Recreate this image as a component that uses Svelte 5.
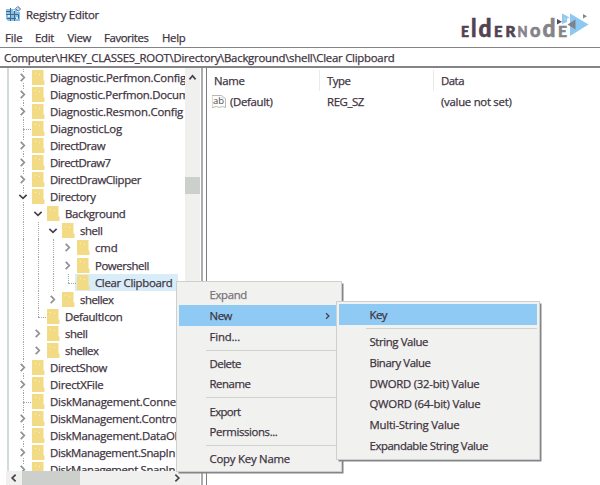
<script>
  // label, width, level, state (c = collapsed, o = open, l = leaf)
  const tree = [
    ['Diagnostic.Perfmon.Config', 136, 0, 'c'],
    ['Diagnostic.Perfmon.Docum', 139, 0, 'c'],
    ['Diagnostic.Resmon.Config', 133, 0, 'c'],
    ['DiagnosticLog', 72, 0, 'l'],
    ['DirectDraw', 55, 0, 'c'],
    ['DirectDraw7', 60.5, 0, 'c'],
    ['DirectDrawClipper', 91, 0, 'c'],
    ['Directory', 45.5, 0, 'o'],
    ['Background', 60.5, 1, 'o'],
    ['shell', 22.5, 2, 'o'],
    ['cmd', 22.5, 3, 'c'],
    ['Powershell', 54, 3, 'c'],
    ['Clear Clipboard', 77.5, 3, 'l', true],
    ['shellex', 33.5, 2, 'c'],
    ['DefaultIcon', 57.5, 1, 'l'],
    ['shell', 22.5, 1, 'c'],
    ['shellex', 33.5, 1, 'c'],
    ['DirectShow', 57, 0, 'c'],
    ['DirectXFile', 53.5, 0, 'c'],
    ['DiskManagement.Connection', 151, 0, 'l'],
    ['DiskManagement.Control', 129, 0, 'c'],
    ['DiskManagement.DataObject', 149, 0, 'c'],
    ['DiskManagement.SnapIn', 125, 0, 'c'],
    ['DiskManagement.SnapIn', 125, 0, 'c']
  ];
  const menus = [['File', 17.5, 5], ['Edit', 19, 12.5], ['View', 23.5, 13.5], ['Favorites', 44.5, 13], ['Help', 23.5, 13.5]];
  const context = [['Expand', 37.5], ['New', 22.5], ['Find...', 30.5], null, ['Delete', 31.5], ['Rename', 41], null, ['Export', 31], ['Permissions...', 68], null, ['Copy Key Name', 80.5]];
  const sub = [['Key', 17.5], null, ['String Value', 58.5], ['Binary Value', 61], ['DWORD (32-bit) Value', 110], ['QWORD (64-bit) Value', 111], ['Multi-String Value', 90], ['Expandable String Value', 118.5]];
  const logo = [
    ['E', 461, 8, 15], ['l', 471, 5.5, 25], ['d', 478.5, 13, 25], ['E', 494, 8.5, 15], ['R', 505.5, 10, 15],
    ['N', 517.5, 10, 15], ['o', 530, 10.5, 19], ['d', 542.5, 13, 25], ['E', 558, 9, 15]
  ];

  // Spreads the letters so that a label takes exactly the given width
  function fit(node, width) {
    const apply = () => {
      node.style.letterSpacing = '0px';
      const natural = node.getBoundingClientRect().width;
      node.style.letterSpacing = (width - natural) / node.textContent.length + 'px';
    };
    apply();
    document.fonts?.ready.then(apply);
  }
</script>

{#snippet label(text, width)}<span class="label" use:fit={width}>{text}</span>{/snippet}

{#snippet items(list, active)}
  {#each list as item}
    {#if item}
      <div class="item" class:active={item[0] === active} class:muted={item[0] === 'Expand'}>
        {@render label(item[0], item[1])}
        {#if item[0] === 'New'}<svg class="arrow" width="6" height="8" viewBox="0 0 6 8"><path d="M1.5 1.7 3.9 4 1.5 6.3" /></svg>{/if}
      </div>
    {:else}
      <div class="separator"></div>
    {/if}
  {/each}
{/snippet}

<div class="window">
  <header>
    <svg class="app-icon" width="17" height="17" viewBox="0 0 17 17">
      <path fill="#83c2ee" d="M1 3h11v3h3v9H3l-2-2z" />
      <path fill="none" stroke="#4c6680" stroke-width="1" d="M1.5 5.5h4v-3m0 3v3h-4m4 0h4v-3m-7 7h11v-4h-4v6m-4-6v6" />
      <path fill="#d8effc" d="M3 9h2v2H3zm5-5h2v1H8zm3 7h2v2h-2z" />
      <path fill="#b4dcf5" stroke="#54708a" d="m13.2.8 2.4 2.2-2.4 2.2L11 3z" />
    </svg>
    {@render label('Registry Editor', 73)}
  </header>
  <svg class="logo" width="600" height="47" viewBox="0 0 600 47" role="img" aria-label="ElderNode">
    {#each logo as [c, x, w, size], i}
      <text {x} y="37" font-size={size} textLength={w} lengthAdjust="spacingAndGlyphs" fill={i < 5 ? '#514353' : '#858489'} stroke={i < 5 ? '#514353' : '#858489'}>{c}</text>
    {/each}
    <path fill="#8cc8f1" d="M562 13.5l5 2.5v6l-5 2zM570 13.5 588.5 24.5 570 36z" />
    <path fill="#b8cfdd" d="m564 17 3 2-3 2zm3-1 3 1.5-3 1.5z" />
    <path fill="#81818a" d="M575.5 19.5v10l-8-5z" />
    <path fill="#56485b" d="m557 19 5 2.8-5 2.7z" />
    <path fill="#7b8990" d="m583 14 4 2.2-4 2.3z" />
  </svg>
  <nav>
    {#each menus as [t, w, gap]}<span style:margin-left="{gap}px">{@render label(t, w)}</span>{/each}
  </nav>
  <div class="address">{@render label('Computer\\HKEY_CLASSES_ROOT\\Directory\\Background\\shell\\Clear Clipboard', 390.5)}</div>
  <main>
    <aside>
      <div class="upper">
        <div class="tree">
          {#each tree as [t, w, level, state, selected], i}
            <div class="row">
              {#each Array(level) as _}<i class="cell line"></i>{/each}
              <i class="cell" class:line={state === 'l' || i < 7 || level === 0} class:last={selected || t === 'DefaultIcon'} class:leaf={state === 'l'}>
                {#if state === 'c'}<svg width="8" height="11" viewBox="0 0 8 11"><path stroke="#909194" d="m2.3 2.4 3 3.1-3 3.1" /></svg>{/if}
                {#if state === 'o'}<svg width="10" height="8" viewBox="0 0 10 8"><path stroke="#493e4c" d="M2 2.5 5 5.3l3-2.8" /></svg>{/if}
              </i>
              <div class="entry" class:selected>
                <svg class="folder" width="13" height="15" viewBox="0 0 13 15"><path fill="#f3db86" d="M0 0h11.5v10.5h1V15H0z" /><path fill="#fff0b6" d="M3 3h1v1H3zm4 1h1v1H7z" /></svg>
                {@render label(t, w)}
              </div>
            </div>
          {/each}
        </div>
        <div class="vscroll">
          <svg width="15" height="15" viewBox="0 0 15 15"><path d="m5 10.7 2.5-2.9 2.5 2.9" /></svg>
          <div class="thumb"></div>
        </div>
      </div>
      <div class="hscroll">
        <svg width="14" height="14" viewBox="0 0 14 14"><path d="M9 4.3 6.2 7 9 9.7" /></svg>
        <div class="thumb"></div>
        <svg width="14" height="14" viewBox="0 0 14 14"><path d="M6 4.3 8.8 7 6 9.7" /></svg>
      </div>
    </aside>
    <div class="divider"></div>
    <section>
      <div class="columns">
        <div class="name">{@render label('Name', 30.5)}</div>
        <div class="type">{@render label('Type', 23.5)}</div>
        <div>{@render label('Data', 23)}</div>
      </div>
      <div class="columns value">
        <div class="name">
          <svg width="15" height="15" viewBox="0 0 15 15"><path fill="#fffdf7" stroke="#b8b8b2" d="M.5 1.5h9l4 3v9l-3-1-3 1-3-1-4 1z" /><path fill="#ddd" d="M9.5 1.5v3h4" /><text x="1" y="10" textLength="11" lengthAdjust="spacingAndGlyphs">ab</text></svg>
          {@render label('(Default)', 42.5)}
        </div>
        <div class="type">{@render label('REG_SZ', 37)}</div>
        <div>{@render label('(value not set)', 70.5)}</div>
      </div>
    </section>
  </main>
  <div class="popup context">{@render items(context, 'New')}</div>
  <div class="popup sub">{@render items(sub, 'Key')}</div>
</div>

<style>
  .window { position: relative; display: flex; flex-direction: column; width: 600px; height: 485px; overflow: hidden; background: #fff; color: #40343f; font: 11.4px/17px "Open Sans", "Noto Sans", sans-serif; -webkit-text-stroke: 0.25px currentColor; }
  .label { display: inline-block; white-space: pre; flex: none; }
  svg { flex: none; display: block; }
  path { stroke-linecap: square; }
  header { display: flex; align-items: center; gap: 4px; height: 28px; padding-left: 5px; box-sizing: border-box; flex: none; }
  .app-icon { width: 17px; }
  nav { display: flex; align-items: center; height: 19px; flex: none; line-height: 19px; }
  .logo { position: absolute; top: 0; left: 0; font-family: Lato, "Open Sans", sans-serif; font-weight: 900; -webkit-text-stroke: 0; }
  .logo text { stroke-width: 0.6; }
  .address { height: 18px; flex: none; padding-left: 4px; border-top: 1px solid #848387; border-bottom: 2px solid #848387; line-height: 20px; }
  main { display: flex; flex: 1; min-height: 0; }
  aside { width: 192px; margin-left: 1px; padding-left: 6px; display: flex; flex-direction: column; flex: none; }
  .upper { display: flex; height: 403px; border-left: 2px solid #d4dad6; }
  .tree { width: 176px; padding-top: 1px; overflow: hidden; flex: none; box-sizing: border-box; }
  .row { display: flex; height: 17.05px; padding-left: 6px; }
  .cell { position: relative; width: 15px; flex: none; display: flex; align-items: center; justify-content: center; }
  .cell svg { position: relative; background: #fff; }
  .cell path, .vscroll path, .hscroll path { fill: none; stroke-width: 1.7; }
  .line::before { content: ""; position: absolute; left: 8px; top: 0; bottom: 0; border-left: 1px dotted #a5a8a5; }
  .last::before { bottom: 8px; }
  .leaf::after { content: ""; position: absolute; left: 8px; right: -1px; top: 9px; border-top: 1px dotted #a5a8a5; }
  .entry { display: flex; align-items: center; gap: 5px; padding: 0 1px 0 2px; }
  .selected { padding-right: 5px; background: #d9edf8; }
  .vscroll { width: 15px; background: #f0f0ef; }
  .vscroll .thumb { width: 15px; height: 17px; margin-top: 94px; background: #cccfcc; }
  .hscroll { display: flex; height: 14px; width: 194px; background: #f0f0ef; margin-left: -1px; }
  .hscroll .thumb { width: 58px; margin-left: 2px; margin-right: 90px; background: #cccfcc; }
  .vscroll path, .hscroll path { stroke: #493e4c; }
  .divider { width: 3px; margin-left: 2px; border-left: 2px solid #aaacad; border-right: 1px solid #7c7a7f; flex: none; background: #fff; }
  section { padding-top: 2px; flex: 1; }
  .columns { display: flex; height: 21px; line-height: 21px; padding-left: 6px; }
  .columns > div { display: flex; align-items: center; }
  .columns .name { width: 114px; box-sizing: border-box; padding-left: 1px; }
  .columns .type { width: 114px; }
  .columns:first-child .name, .columns:first-child .type { background: linear-gradient(#ebebeb, #ebebeb) no-repeat right 7px top 0 / 1px 21px; }
  .columns text { font: 9.5px "Open Sans", sans-serif; fill: #494b5c; stroke: none; }
  .value .name { padding-left: 0; gap: 3px; margin-left: -1px; width: 115px; }
  .popup { position: absolute; background: #f1f1ef; border: 1px solid #cdd1ce; box-sizing: border-box; padding: 2px 2px; }
  .context { left: 176px; top: 281px; width: 166px; height: 191px; box-shadow: 2px 2px 0 -0.5px #858488; }
  .sub { left: 336px; top: 301px; width: 204px; height: 159px; box-shadow: 2px 2px 0 -0.5px #858488; }
  .item { display: flex; align-items: center; box-sizing: border-box; height: 20.85px; padding: 1px 0 0 30.5px; line-height: 20px; }
  .active { background: #8ecaf3; }
  .muted { color: #77737a; }
  .separator { height: 6.2px; margin-left: 27px; background: linear-gradient(#cfd3d0, #cfd3d0) no-repeat 0 3px / 100% 1px; }
  .arrow { margin-left: auto; margin-right: 8px; }
  .context .arrow { margin-right: 8px; }
  .arrow path { fill: none; stroke: #493e4c; stroke-width: 1.3; }
</style>
